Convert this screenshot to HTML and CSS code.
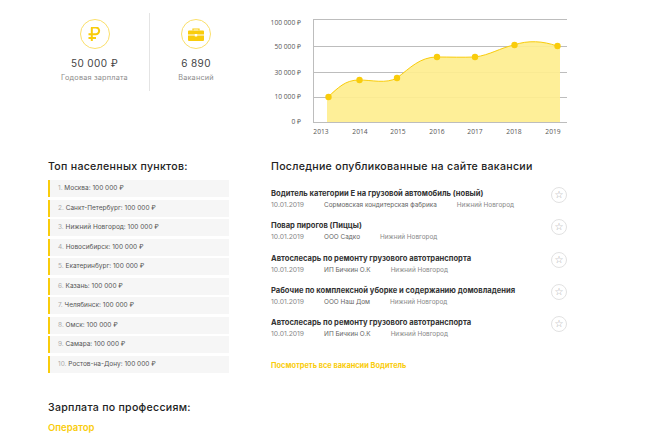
FILE: index.html
```html
<!DOCTYPE html>
<html lang="ru">
<head>
    <meta charset="UTF-8">
    <meta name="viewport" content="width=device-width, initial-scale=1.0">
    <title>Зарплаты</title>
    <link rel="stylesheet" href="styles.css">
</head>
<body>
    <div class="top">
        <div class="stats">
            <div class="stat stat-first">
                <div class="stat-icon">
                    <svg width="13" height="14" viewBox="0 0 13 14"><path d="M3.800 0.500V14M0.500 11h7.500M0.500 7.200h7.300a3.350 3.350 0 0 0 0-6.700H3" fill="none" stroke="#f9cc0b" stroke-width="2"/></svg>
                </div>
                <div class="stat-value">50 000 ₽</div>
                <div class="stat-label">Годовая зарплата</div>
            </div>
            <div class="stat stat-second">
                <div class="stat-icon">
                    <svg width="16" height="13" viewBox="0 0 16 13"><path d="M5 2.500V1h6v1.500" fill="none" stroke="#f9cc0b" stroke-width="1.200"/><path d="M1 2.500h14a1 1 0 0 1 1 1V6.500H9.200V6H6.800v.5H0V3.500a1 1 0 0 1 1-1zM0 7.500h6.800v1h2.400v-1H16V12a1 1 0 0 1-1 1H1a1 1 0 0 1-1-1z" fill="#f9cc0b"/></svg>
                </div>
                <div class="stat-value">6 890</div>
                <div class="stat-label">Вакансий</div>
            </div>
        </div>
        <svg class="chart" width="310" height="140" viewBox="270 0 310 140">
            <g stroke="#bdbdbd" stroke-width="1">
                <path d="M313 19.500H567M313 46.500H567M313 72.500H567M313 97.500H567M313 122.500H567M313.500 19V123" fill="none"/>
            </g>
            <path d="M327 97C338 88 345 80 359 80C372 80 386 84 397 78C410 68 420 57 437 57C450 57 463 57.500 475 57C490 55 500 48 514 45C528 40 543 41 560 47V122H327Z" fill="#feee8f" fill-opacity="0.92"/>
            <path d="M328 97C338 88 345 80 359 80C372 80 386 84 397 78C410 68 420 57 437 57C450 57 463 57.500 475 57C490 55 500 48 514 45C528 40 543 41 557 46" fill="none" stroke="#f9cc0b" stroke-width="1"/>
            <g fill="#f9cc0b">
                <circle cx="328.500" cy="97" r="3.200"/>
                <circle cx="359.500" cy="80" r="3.200"/>
                <circle cx="397" cy="78" r="3.200"/>
                <circle cx="437" cy="57" r="3.200"/>
                <circle cx="475" cy="57" r="3.200"/>
                <circle cx="514.500" cy="45" r="3.200"/>
                <circle cx="557.500" cy="46" r="3.200"/>
            </g>
            <g class="chart-y" text-anchor="end">
                <text x="301" y="24.500">100 000 ₽</text>
                <text x="301" y="49">50 000 ₽</text>
                <text x="301" y="74.500">30 000 ₽</text>
                <text x="301" y="98.500">10 000 ₽</text>
                <text x="301" y="124">0 ₽</text>
            </g>
            <g class="chart-x" text-anchor="middle">
                <text x="321" y="134">2013</text>
                <text x="360" y="134">2014</text>
                <text x="398" y="134">2015</text>
                <text x="437" y="134">2016</text>
                <text x="475" y="134">2017</text>
                <text x="514" y="134">2018</text>
                <text x="553" y="134">2019</text>
            </g>
        </svg>
    </div>

    <div class="middle">
        <div class="cities">
            <h2>Топ населенных пунктов:</h2>
            <ol class="city-list">
                <li><span class="num">1.</span> Москва: 100 000 ₽</li>
                <li><span class="num">2.</span> Санкт-Петербург: 100 000 ₽</li>
                <li><span class="num">3.</span> Нижний Новгород: 100 000 ₽</li>
                <li><span class="num">4.</span> Новосибирск: 100 000 ₽</li>
                <li><span class="num">5.</span> Екатеринбург: 100 000 ₽</li>
                <li><span class="num">6.</span> Казань: 100 000 ₽</li>
                <li><span class="num">7.</span> Челябинск: 100 000 ₽</li>
                <li><span class="num">8.</span> Омск: 100 000 ₽</li>
                <li><span class="num">9.</span> Самара: 100 000 ₽</li>
                <li><span class="num">10.</span> Ростов-на-Дону: 100 000 ₽</li>
            </ol>
        </div>
        <div class="jobs">
            <h2>Последние опубликованные на сайте вакансии</h2>
            <div class="job">
                <div>
                    <div class="job-title">Водитель категории Е на грузовой автомобиль (новый)</div>
                    <div class="job-meta"><span class="job-date">10.01.2019</span><span>Сормовская кондитерская фабрика</span><span>Нижний Новгород</span></div>
                </div>
                <div class="fav">☆</div>
            </div>
            <div class="job">
                <div>
                    <div class="job-title">Повар пирогов (Пиццы)</div>
                    <div class="job-meta"><span class="job-date">10.01.2019</span><span>ООО Садко</span><span>Нижний Новгород</span></div>
                </div>
                <div class="fav">☆</div>
            </div>
            <div class="job">
                <div>
                    <div class="job-title">Автослесарь по ремонту грузового автотранспорта</div>
                    <div class="job-meta"><span class="job-date">10.01.2019</span><span>ИП Бичкин О.К</span><span>Нижний Новгород</span></div>
                </div>
                <div class="fav">☆</div>
            </div>
            <div class="job">
                <div>
                    <div class="job-title">Рабочие по комплексной уборке и содержанию домовладения</div>
                    <div class="job-meta"><span class="job-date">10.01.2019</span><span>ООО Наш Дом</span><span>Нижний Новгород</span></div>
                </div>
                <div class="fav">☆</div>
            </div>
            <div class="job">
                <div>
                    <div class="job-title">Автослесарь по ремонту грузового автотранспорта</div>
                    <div class="job-meta"><span class="job-date">10.01.2019</span><span>ИП Бичкин О.К</span><span>Нижний Новгород</span></div>
                </div>
                <div class="fav">☆</div>
            </div>
            <a class="all-link" href="#">Посмотреть все вакансии Водитель</a>
        </div>
    </div>

    <div class="professions">
        <h2>Зарплата по профессиям:</h2>
        <a class="prof-link" href="#">Оператор</a>
    </div>
</body>
</html>
```

FILE: styles.css
```css
html, body {
    height: 440px;
    overflow: hidden;
}
body {
    font-family: Inter, "Noto Sans", sans-serif;
    background-color: white;
    color: #333;
    margin: 0;
    padding-left: 48px;
}
h2 {
    font-size: 10.600px;
    line-height: 14px;
    font-weight: 500;
    color: #222;
    margin: 0;
    letter-spacing: 0.28px;
}
a {
    color: #f9cc0b;
    text-decoration: none;
}
.top {
    display: flex;
    height: 160px;
}
.stats {
    display: flex;
    width: 222px;
    padding-top: 13px;
    box-sizing: border-box;
    align-items: flex-start;
}
.stat {
    height: 78px;
    box-sizing: border-box;
    padding-top: 6px;
    display: flex;
    flex-direction: column;
    align-items: center;
}
.stat-first {
    width: 102px;
    padding-right: 8px;
    border-right: 1px solid #e4e4e4;
}
.stat-second {
    width: 92px;
}
.stat-icon {
    width: 30px;
    height: 30px;
    border: 1px solid #fbdf6a;
    border-radius: 50%;
    box-sizing: border-box;
    display: flex;
    align-items: center;
    justify-content: center;
}
.stat-value {
    font-size: 10px;
    line-height: 14px;
    margin-top: 7px;
    letter-spacing: 0.4px;
    color: #444;
}
.stat-label {
    font-size: 7.300px;
    line-height: 12px;
    margin-top: 2px;
    color: #8b8b8b;
    letter-spacing: 0.2px;
}
.chart {
    display: block;
}
.chart text {
    font-family: "Open Sans", sans-serif;
    font-size: 6.700px;
    fill: #555;
}
.middle {
    display: flex;
}
.cities {
    width: 181px;
    margin-right: 42px;
}
.city-list {
    list-style: none;
    margin: 6px 0 0;
    padding: 0;
    display: flex;
    flex-direction: column;
    gap: 2.500px;
}
.city-list li {
    height: 17px;
    line-height: 17px;
    background-color: #f6f6f6;
    border-left: 2px solid #f9cc0b;
    padding-left: 8px;
    font-size: 6.500px;
    color: #555;
    white-space: nowrap;
}
.num {
    color: #aaa;
}
.jobs {
    width: 296px;
}
.job {
    display: flex;
    justify-content: space-between;
    height: 32.300px;
}
.jobs h2 {
    margin-bottom: 14px;
}
.job-title {
    font-size: 7.600px;
    line-height: 11px;
    font-weight: 700;
    color: #333;
    white-space: nowrap;
}
.job-meta {
    display: flex;
    gap: 20px;
    font-size: 6.400px;
    line-height: 10px;
    margin-top: 1px;
    color: #666;
    white-space: nowrap;
}
.job-meta span:last-child,
.job-date {
    color: #888;
}
.job-date {
    font-size: 6.800px;
}
.fav {
    width: 16px;
    height: 16px;
    border: 1px solid #e2e2e2;
    border-radius: 50%;
    box-sizing: border-box;
    margin-top: -1px;
    font-family: "DejaVu Sans", sans-serif;
    font-size: 10px;
    line-height: 14px;
    text-align: center;
    color: #aaa;
}
.all-link {
    display: block;
    font-size: 7.400px;
    line-height: 12px;
    font-weight: 700;
    margin-top: 11px;
}
.professions {
    margin-top: 28.500px;
}
.prof-link {
    display: block;
    font-size: 9.500px;
    line-height: 14px;
    font-weight: 600;
    margin-top: 6px;
}
```
